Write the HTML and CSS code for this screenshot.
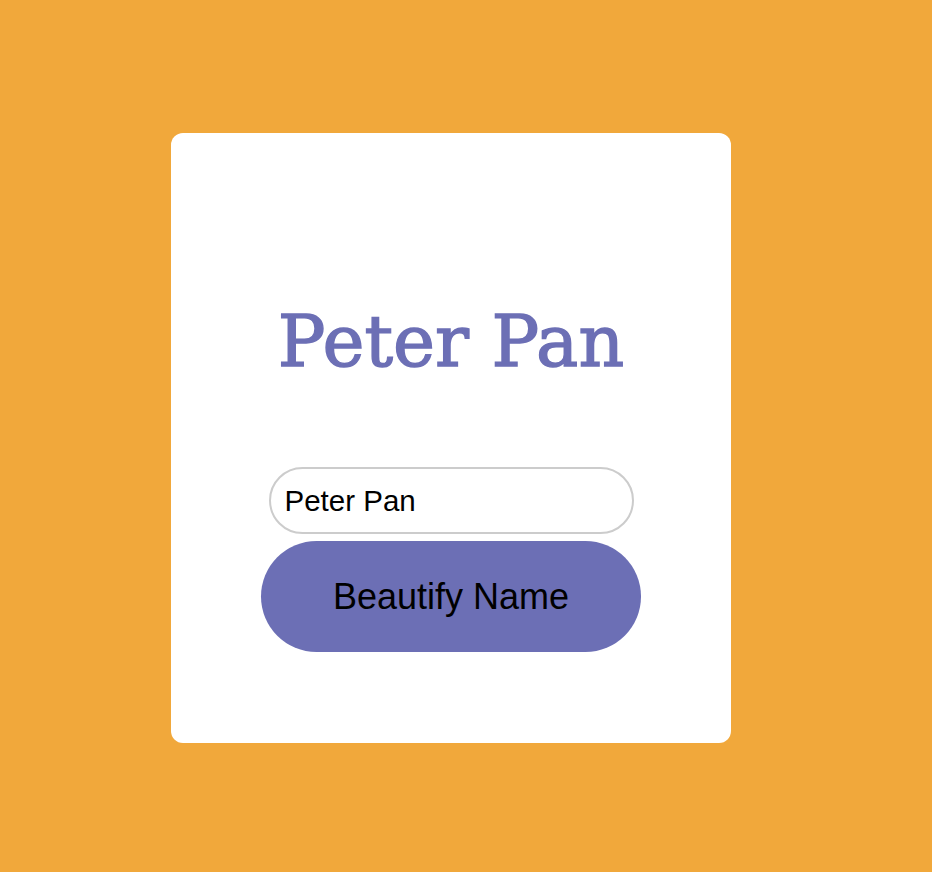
FILE: index.html
```html
<!DOCTYPE html>
<html lang="en">
<head>
<meta charset="utf-8">
<title>Beautify Name</title>
<link rel="stylesheet" href="styles.css">
</head>
<body>
<main class="page">
  <section class="card">
    <h1 class="title">Peter Pan</h1>
    <input class="name-input" type="text" value="Peter Pan">
    <button class="beautify-btn" type="button">Beautify Name</button>
  </section>
</main>
</body>
</html>
```
FILE: styles.css
```css
html, body {
  margin: 0;
  padding: 0;
  background: #f1a83b;
}

.page {
  box-sizing: border-box;
  min-height: 100vh;
  display: flex;
  justify-content: center;
  align-items: center;
  padding: 4px 30px 0 0;
}

.card {
  box-sizing: border-box;
  width: 560px;
  background: #ffffff;
  border-radius: 12px;
  display: flex;
  flex-direction: column;
  align-items: center;
  padding: 173px 0 91px;
}

.title {
  margin: 0 0 90px;
  font-family: "DejaVu Serif", serif;
  font-weight: normal;
  font-size: 71px;
  line-height: 1;
  color: #6c6fb5;
  letter-spacing: 0;
  -webkit-text-stroke: 1.4px #6c6fb5;
}

.name-input {
  box-sizing: border-box;
  width: 365px;
  height: 67px;
  border: 2px solid #cccccc;
  border-radius: 34px;
  padding: 0 14px;
  font-family: "Liberation Sans", Arial, sans-serif;
  font-size: 29.5px;
  color: #000000;
  background: #ffffff;
  outline: none;
  margin: 0 0 7px;
}

.beautify-btn {
  box-sizing: border-box;
  width: 380px;
  height: 111px;
  border: none;
  border-radius: 56px;
  background: #6c6fb5;
  color: #000000;
  font-family: "Liberation Sans", Arial, sans-serif;
  font-size: 36px;
  padding: 0;
  cursor: pointer;
}
```
